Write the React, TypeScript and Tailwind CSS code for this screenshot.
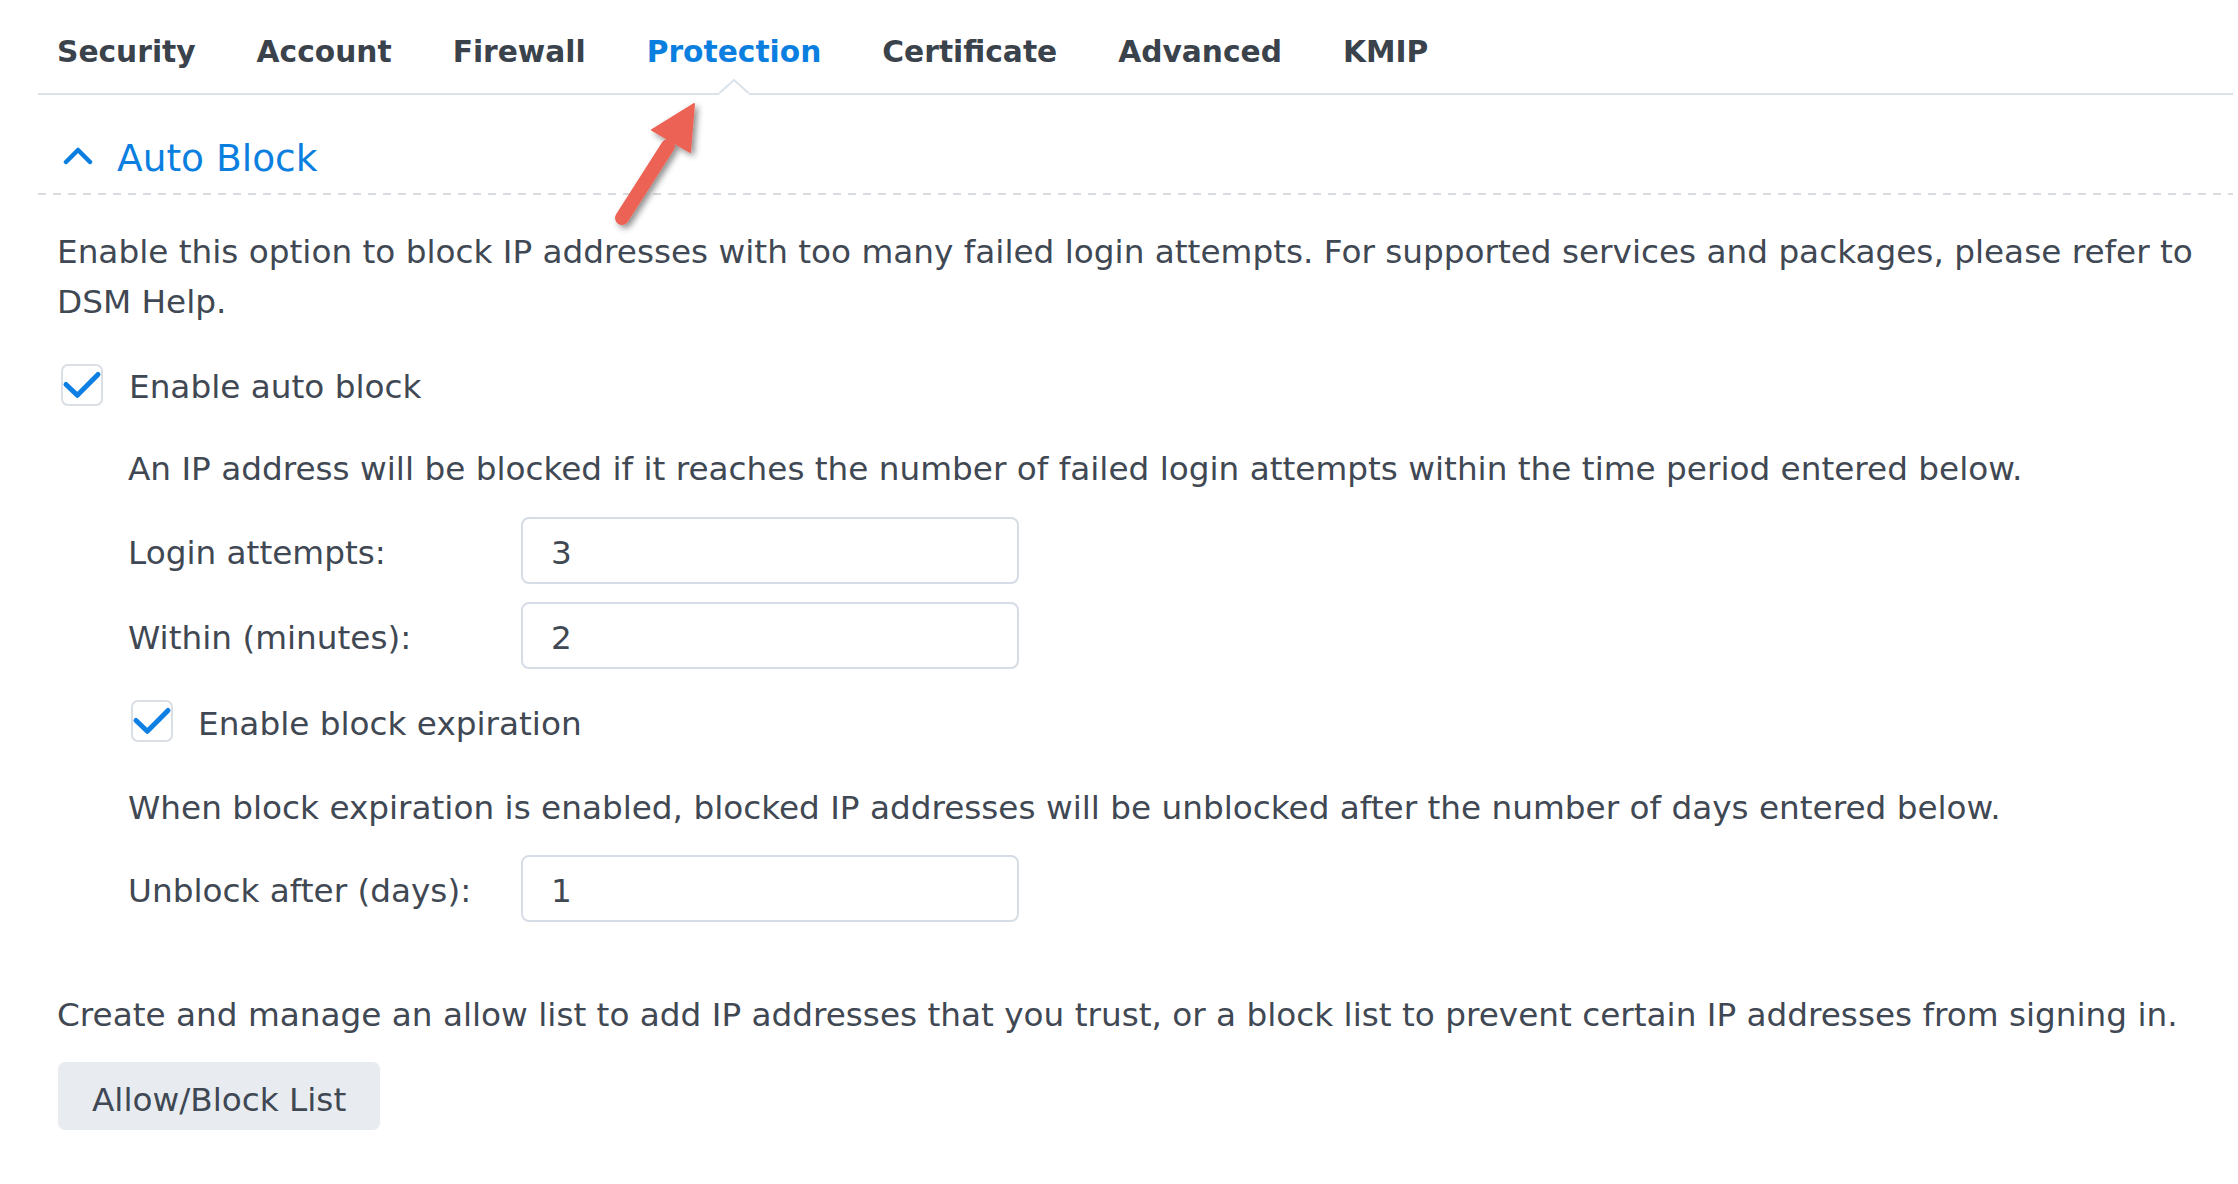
import React from "react";

const tabs = ["Security", "Account", "Firewall", "Protection", "Certificate", "Advanced", "KMIP"];

function Check({ className = "" }: { className?: string }) {
  return (
    <div className={"w-[42px] h-[42px] shrink-0 rounded-[7px] border-2 border-[#dadfe5] bg-white flex items-center justify-center " + className}>
      <svg width="42" height="42" viewBox="0 0 42 42" className="-m-[2px]">
        <path d="M5 20.5 L16.3 31.3 L37 10.5" fill="none" stroke="#0f80e3" strokeWidth="5" strokeLinecap="round" strokeLinejoin="round" />
      </svg>
    </div>
  );
}

function Field({ label, value }: { label: string; value: string }) {
  return (
    <div className="flex items-center">
      <div className="w-[393px] shrink-0 pt-[5px]">{label}</div>
      <input
        readOnly
        defaultValue={value}
        className="w-[498px] h-[67px] rounded-[8px] border-2 border-[#d6dde6] bg-white pl-[28px] pt-[5px] outline-none text-[#3f4853]"
      />
    </div>
  );
}

export default function App() {
  return (
    <div className="relative w-[2238px] h-[1184px] bg-white font-['DejaVu_Sans',sans-serif] text-[#3f4853] overflow-hidden">
      <div className="ml-[38px] mr-[5px]">
        {/* Tabs */}
        <div className="flex h-[95px] border-b-2 border-[#dae2ea] pl-[19px] gap-[61px] text-[29.7px] font-bold leading-[36px] text-[#3a424b]">
          {tabs.map((t) => (
            <div key={t} className={"relative pt-[34px] " + (t === "Protection" ? "text-[#0b7fe0]" : "")}>
              {t}
              {t === "Protection" && (
                <svg width="31" height="16" viewBox="0 0 31 16" className="absolute left-1/2 -translate-x-1/2 bottom-[-2px]">
                  <path d="M0 15 L15.5 1 L31 15" fill="#fff" stroke="#dae2ea" strokeWidth="2" />
                  <rect x="1" y="14" width="29" height="2" fill="#fff" />
                </svg>
              )}
            </div>
          ))}
        </div>

        {/* Section header */}
        <div className="flex items-center gap-[24px] pl-[25px] pt-[38px] pb-[10px]">
          <svg width="30" height="18" viewBox="0 0 30 18" className="mb-[4px]">
            <path d="M3 15 L15 3 L27 15" fill="none" stroke="#0b7fe0" strokeWidth="4.5" strokeLinecap="round" strokeLinejoin="round" />
          </svg>
          <div className="text-[37.5px] leading-[50px] text-[#0b7fe0]">Auto Block</div>
        </div>
        <div className="h-[2px] bg-[linear-gradient(to_right,#d8dce1_55%,transparent_55%)] bg-[length:15px_2px]" />

        {/* Content */}
        <div className="pl-[19px] text-[32.7px] leading-[50px]">
          <p className="mt-[32px]">
            Enable this option to block IP addresses with too many failed login attempts. For supported services and packages, please refer to DSM Help.
          </p>

          <div className="mt-[33px] h-[50px] flex items-center gap-[26px]">
            <Check className="ml-[4px]" />
            <span className="pt-[4px]">Enable auto block</span>
          </div>

          <div className="pl-[71px]">
            <p className="mt-[34px]">
              An IP address will be blocked if it reaches the number of failed login attempts within the time period entered below.
            </p>
            <div className="mt-[23px]">
              <Field label="Login attempts:" value="3" />
            </div>
            <div className="mt-[18px]">
              <Field label="Within (minutes):" value="2" />
            </div>
            <div className="mt-[27px] h-[50px] flex items-center gap-[25px]">
              <Check className="ml-[3px]" />
              <span className="pt-[5px]">Enable block expiration</span>
            </div>
            <p className="mt-[37px]">
              When block expiration is enabled, blocked IP addresses will be unblocked after the number of days entered below.
            </p>
            <div className="mt-[22px]">
              <Field label="Unblock after (days):" value="1" />
            </div>
          </div>

          <p className="mt-[68px]">
            Create and manage an allow list to add IP addresses that you trust, or a block list to prevent certain IP addresses from signing in.
          </p>
          <button className="mt-[22px] ml-[1px] h-[68px] px-[34px] pt-[7px] rounded-[7px] bg-[#e8ecf0] text-[#3f4853] leading-[50px]">
            Allow/Block List
          </button>
        </div>
      </div>

      {/* Annotation arrow */}
      <svg className="absolute left-[590px] top-[60px]" width="180" height="190" viewBox="590 60 180 190">
        <defs>
          <filter id="sh" x="-30%" y="-30%" width="160%" height="160%">
            <feDropShadow dx="3" dy="3" stdDeviation="3" floodColor="#000" floodOpacity="0.45" />
          </filter>
        </defs>
        <g filter="url(#sh)">
          <line x1="622" y1="218" x2="668" y2="146" stroke="#ec6354" strokeWidth="14" strokeLinecap="round" />
          <polygon points="694,104 652,130 690,152" fill="#ec6354" stroke="#ec6354" strokeWidth="2" strokeLinejoin="round" />
        </g>
      </svg>
    </div>
  );
}
